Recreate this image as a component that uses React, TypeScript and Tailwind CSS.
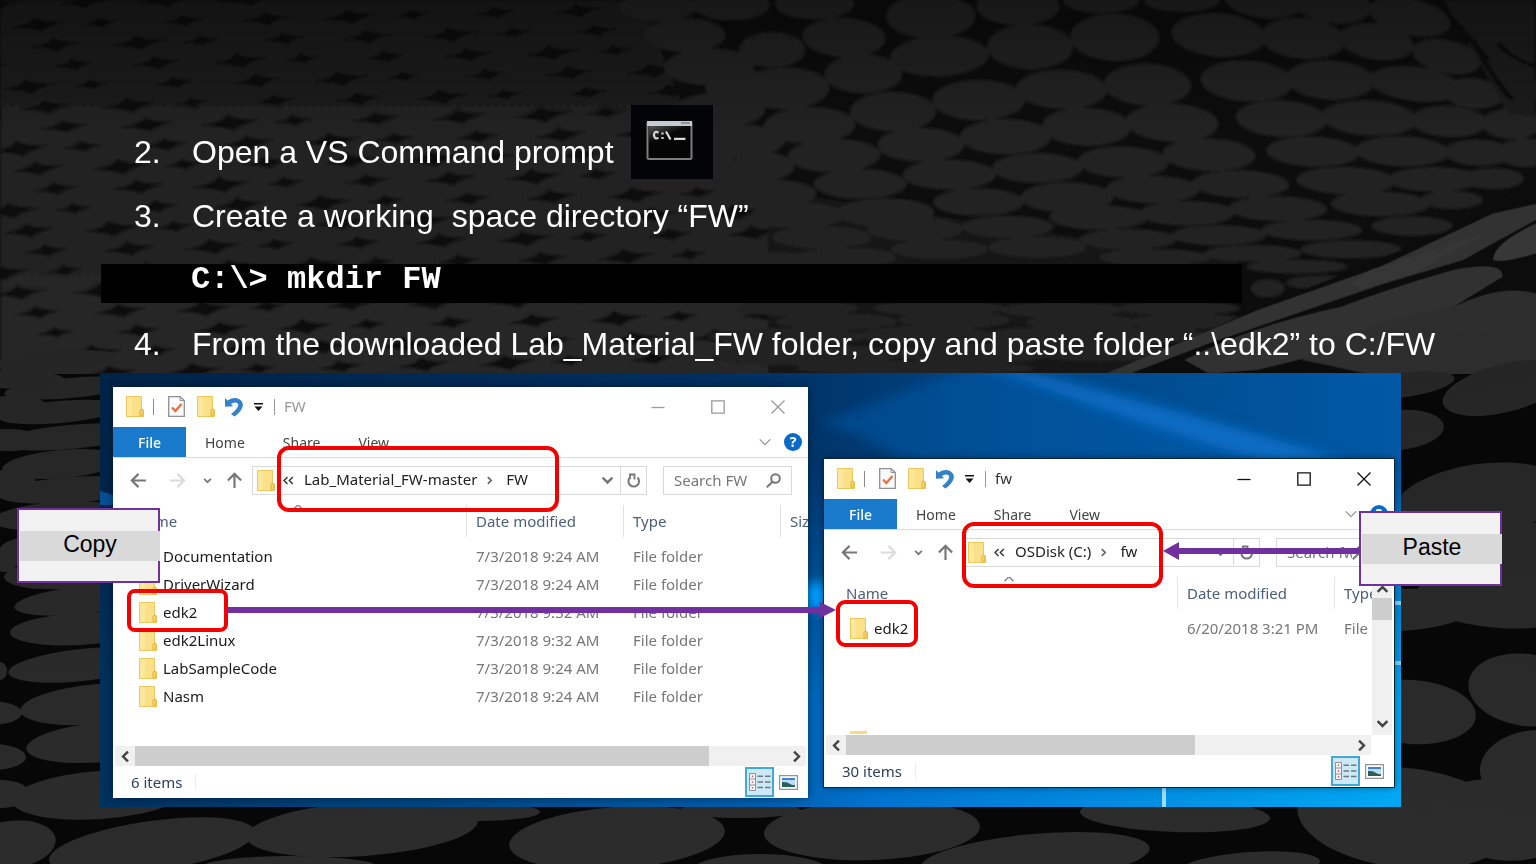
import React from "react";

type Ellipse = [number, number, number, number, number];

const upperStones: Ellipse[] = [
  [-225, 20, 76, 40, 0], [-75, 14, 76, 44, 0], [-170, 105, 80, 48, 0], [-120, 200, 90, 52, -3], [-55, 262, 70, 50, -3], [-100, 330, 92, 50, -3], [-60, 425, 92, 48, -3], [-150, 505, 90, 40, -3],
  [95, 10, 78, 45, 0], [332, 48, 88, 64, 0], [510, 18, 82, 54, 0], [680, 0, 75, 36, 0], [845, 0, 75, 32, 0], [1010, 0, 80, 50, 15], [1150, 10, 80, 55, 20],
  [155, 112, 82, 56, 5], [8, 150, 65, 50, 0], [350, 168, 98, 58, -4], [535, 140, 85, 65, 3], [708, 112, 88, 68, 4], [920, 105, 94, 62, 8], [1092, 115, 84, 58, 10], [1242, 125, 75, 50, 18], [1310, 50, 85, 50, 24], [1385, 170, 70, 45, 24],
  [35, 265, 88, 60, -2], [195, 222, 76, 56, 0], [430, 300, 92, 58, 0], [600, 268, 90, 56, 3], [775, 254, 86, 60, 4], [978, 243, 92, 58, 6], [1148, 240, 88, 56, 6], [1320, 252, 92, 48, 12], [1440, 280, 60, 42, 12], [1530, 270, 50, 45, 10],
  [85, 376, 90, 52, -2], [255, 335, 85, 56, 0], [485, 410, 90, 50, 0], [650, 380, 88, 54, 3], [825, 368, 92, 54, 4], [1048, 356, 90, 52, 5], [1228, 354, 96, 50, 5], [1390, 364, 76, 44, 5], [1520, 370, 60, 44, 0],
  [135, 467, 92, 46, -2], [312, 434, 86, 48, 0], [550, 504, 90, 42, 0], [725, 486, 90, 44, 2], [900, 464, 92, 46, 3], [1112, 455, 92, 42, 3], [1295, 454, 94, 42, 3], [1450, 458, 66, 36, 3], [1550, 458, 60, 40, 0],
  [-10, 500, 60, 40, 0], [188, 552, 92, 42, 0], [370, 524, 92, 42, 0], [610, 592, 92, 42, 0], [785, 568, 92, 38, 1], [965, 552, 96, 38, 2], [1180, 542, 98, 38, 2], [1360, 538, 92, 34, 0], [1480, 536, 60, 28, 0],
  [10, 580, 86, 38, 0], [240, 638, 96, 40, 0], [430, 606, 90, 38, 0], [675, 652, 98, 34, 0], [855, 640, 94, 34, 0], [1040, 626, 98, 34, 1], [1250, 612, 98, 34, 1], [1395, 600, 60, 24, 0],
  [60, 646, 92, 36, 0], [300, 688, 94, 32, 0], [490, 680, 90, 30, 0], [735, 718, 96, 28, 0], [920, 706, 94, 28, 0], [1110, 690, 100, 28, 0], [1315, 678, 80, 26, 0],
  [110, 712, 98, 30, 0], [350, 748, 96, 26, 0], [550, 742, 96, 28, 0], [790, 772, 110, 22, 0], [990, 760, 96, 22, 0], [1190, 748, 100, 24, 0],
  [160, 772, 98, 26, 0], [10, 784, 90, 24, 0], [1020, 865, 32, 24, 0], [1130, 848, 70, 18, 0], [1080, 800, 100, 18, 0],
  [60, 925, 120, 20, 0], [350, 925, 130, 20, 0], [600, 930, 120, 20, 0], [840, 925, 120, 18, 0],
  [140, 965, 120, 22, 0], [380, 960, 110, 22, 0], [640, 968, 110, 22, 0], [860, 965, 120, 20, 0],
  [40, 1010, 160, 22, 0], [320, 1005, 130, 24, 0], [560, 1010, 120, 24, 0], [780, 1005, 110, 22, 0],
  [80, 1065, 190, 28, 0], [420, 1060, 160, 28, 0], [680, 1055, 140, 26, 0], [300, 1105, 240, 18, 0],
];

const edgeStones: Ellipse[] = [
  [55, 360, 62, 9, -4], [20, 380, 45, 9, 0], [70, 388, 66, 10, -5], [10, 406, 38, 10, 0], [60, 412, 62, 11, -5], [70, 437, 72, 12, -5], [8, 440, 34, 11, 0], [62, 464, 60, 14, -5], [72, 490, 74, 13, -4],
  [6, 482, 30, 12, 0], [58, 516, 66, 14, -4], [60, 546, 60, 14, -3], [4, 560, 14, 12, 0], [66, 574, 62, 15, -3], [84, 600, 70, 14, -6], [80, 629, 70, 16, -3],
  [82, 665, 74, 16, -6], [98, 704, 78, 20, -5], [104, 742, 78, 20, -5], [0, 671, 7, 9, 0], [-10, 713, 32, 12, 0], [-8, 757, 34, 13, 0], [0, 794, 30, 14, 0],
  [100, 795, 88, 24, -4], [10, 845, 46, 24, -8], [152, 846, 104, 25, -8], [362, 829, 116, 27, -4], [617, 838, 108, 31, -4], [290, 868, 90, 12, 0], [872, 830, 108, 30, -2], [1035, 858, 115, 24, -5], [1175, 815, 95, 17, 2],
  [740, 810, 60, 8, 0], [480, 812, 60, 9, 0], [760, 872, 70, 18, 0], [1405, 818, 108, 50, 6], [1250, 866, 70, 14, -4], [1500, 820, 70, 40, 8],
  [1412, 712, 64, 32, 4], [1526, 690, 58, 36, 8], [1400, 610, 75, 21, -3], [1500, 600, 85, 28, 4], [1480, 500, 86, 36, -8], [1530, 550, 90, 28, 6],
  [1398, 430, 46, 20, -5], [1505, 388, 64, 24, -14], [1405, 385, 50, 12, -8], [1540, 770, 60, 40, 0],
];

const crevices: { x: number; y: number; s: number }[] = [];
for (let row = 0; row < 19; row++) {
  for (let col = -4; col < 12; col++) {
    const x = col * 78 + row * 23 + ((row * 7 + col * 5) % 4) * 5;
    if (x > -20 && x < 770) crevices.push({ x, y: row * 20 + 4 - col * 2, s: 0.65 + ((row * 3 + col * 5 + 40) % 4) * 0.1 });
  }
}

function StoneBackdrop() {
  return (
    <svg aria-hidden="true" className="absolute inset-0 h-full w-full" viewBox="0 0 1536 864" preserveAspectRatio="xMidYMid slice">
      <defs>
        <filter id="soft" x="-5%" y="-5%" width="110%" height="110%"><feGaussianBlur stdDeviation="1.8" /></filter>
        <linearGradient id="stone" x1="0" y1="0" x2="0" y2="864" gradientUnits="userSpaceOnUse">
          <stop offset="0" stopColor="#1c1c1c" /><stop offset=".3" stopColor="#242424" /><stop offset="1" stopColor="#2c2c2c" />
        </linearGradient>
        <linearGradient id="shade" x1="0" y1="0" x2="0" y2="1">
          <stop offset="0" stopColor="#000" stopOpacity=".3" /><stop offset="1" stopColor="#000" stopOpacity="0" />
        </linearGradient>
      </defs>
      <rect width="1536" height="864" fill="#060606" />
      <g filter="url(#soft)">
        <path d="M0 0H790L780 380H0Z" fill="url(#stone)" />
        {crevices.map((c, i) => (
          <path
            key={i}
            transform={`translate(${c.x} ${c.y}) scale(${c.s})`}
            d="M-34 4Q-8 1 -4 -8Q6 -1 32 -3Q9 2 3 9Q-6 4 -34 4"
            fill="#070707"
          />
        ))}
        <path d="M640 0H1536V864H768V190L700 150Z" fill="#0a0a0a" />
        <path d="M768 190L1240 262L1130 374H768Z" fill="#181818" />
        <g transform="translate(768 0) scale(.4898 .3333)" fill="#232323">
          {upperStones.map(([x, y, rx, ry, a], i) => (
            <ellipse key={i} cx={x} cy={y} rx={rx + 3} ry={ry + 3} transform={`rotate(${a} ${x} ${y})`} />
          ))}
          <path d="M1380 0Q1450 180 1510 340L1568 350V0Z" fill="#1d1d1d" />
          <path d="M1440 120Q1480 240 1520 300M1490 130Q1520 180 1568 200M1400 60L1470 180" stroke="#090909" strokeWidth="12" fill="none" />
        </g>
      </g>
      <g transform="translate(768 0) scale(.4898 .3333)">
        <path d="M700 1120L1000 925L1380 700L1568 530V1200H700Z" fill="#0c0c0c" />
        <path d="M690 1120L1000 930L1250 800L1480 640L1568 612V660L1480 730L1420 780L1260 850L1100 930L900 1030L740 1120Z" fill="#323232" />
        <path d="M1190 850L1230 810L1480 690L1320 820L1210 870Z" fill="#363636" />
        <path d="M1480 780Q1480 730 1568 670V760Q1500 790 1480 780" fill="#373737" />
        <path d="M850 1080Q980 980 1170 920Q1300 850 1400 810Q1500 780 1500 830L1400 920L1220 1000L1110 1070L1000 1110L900 1120Z" fill="#313131" />
        <path d="M1090 1080Q1180 980 1400 920Q1500 850 1568 880V1120Q1500 1150 1390 1130L1220 1120Z" fill="#2e2e2e" />
        <path d="M1240 1200Q1220 1120 1300 1050Q1430 980 1568 990V1200Z" fill="#2d2d2d" />
      </g>
      <path d="M0 374H105V864H0ZM0 805H1536V864H0ZM1399 374H1536V864H1399Z" fill="#070707" />
      <g fill="url(#stone)">
        {edgeStones.map(([x, y, rx, ry, a], i) => (
          <ellipse key={i} cx={x} cy={y} rx={rx} ry={ry} transform={`rotate(${a} ${x} ${y})`} />
        ))}
      </g>
      <rect width="1536" height="130" fill="url(#shade)" />
    </svg>
  );
}

function FolderIcon() {
  return (
    <svg aria-hidden="true" className="block h-[21px] w-[18px] shrink-0" viewBox="0 0 18 21">
      <path d="M.5 .5H15.5V13L17.5 14V20.5H.5Z" fill="#fbe08a" stroke="#ecc75c" />
      <path d="M1 1H6V20H1Z" fill="#fde79c" />
      <path d="M14 20V14.5L15 13H16L17 14V20Z" fill="#f7d264" stroke="#e3b53c" />
    </svg>
  );
}

function CheckDocIcon() {
  return (
    <svg aria-hidden="true" className="block h-[21px] w-[17px]" viewBox="0 0 17 21" fill="none">
      <path d="M.7 .7H12L16.3 4.5V20.3H.7Z" fill="#fbfbfb" stroke="#909090" strokeWidth="1.3" />
      <path d="M12 .7V4.5H16.3" stroke="#909090" />
      <path d="M4 11.5L7.3 15L13.5 8" stroke="#ec6b3c" strokeWidth="2.2" />
    </svg>
  );
}

function UndoIcon() {
  return (
    <svg aria-hidden="true" className="block h-[20px] w-[18px]" viewBox="0 0 18 20" fill="none">
      <path d="M0 1L2.5 3.5Q9 -.5 14 2Q19 5 17.5 10Q15.500 15.5 9.5 19.500L6 17Q12.500 12 13.200 8.500Q13.500 5.800 10.500 5.500Q8 5.400 6 7L8 9.300L0 9.800Z" fill="#3382c8" />
    </svg>
  );
}

function Chevron({ dir, className }: { dir: "up" | "down" | "left" | "right"; className: string }) {
  const paths = { down: "M2 5L8 11L14 5", up: "M2 11L8 5L14 11", left: "M11 2L5 8L11 14", right: "M5 2L11 8L5 14" };
  return (
    <svg aria-hidden="true" className={`block ${className}`} viewBox="0 0 16 16" fill="none" stroke="currentColor">
      <path d={paths[dir]} />
    </svg>
  );
}

function Arrow({ dir, className }: { dir: "up" | "left" | "right"; className: string }) {
  const paths = { left: "M17 9H2M9 2L2 9L9 16", right: "M1 9H16M9 2L16 9L9 16", up: "M9 17V2M2 9L9 2L16 9" };
  return (
    <svg aria-hidden="true" className={`block h-[17px] w-[17px] ${className}`} viewBox="0 0 18 18" fill="none" stroke="currentColor" strokeWidth="2.300">
      <path d={paths[dir]} />
    </svg>
  );
}

function DetailsIcon() {
  return (
    <svg aria-hidden="true" className="block h-[18px] w-[22px]" viewBox="0 0 22 18" fill="none">
      <path d="M.5 .5H6.500V17.500H.5ZM.5 6H6.500M.5 12H6.500" stroke="#8a8f94" fill="#f6f6f6" />
      <path d="M2.800 3.300H4.200M2.800 9H4.200M2.800 14.700H4.200" stroke="#c55" strokeWidth="1.400" />
      <path d="M8.500 3.300H14M16 3.300H21.500M8.500 9H14M16 9H21.500M8.500 14.500H14M16 14.500H21.500" stroke="#70787e" strokeWidth="1.500" />
    </svg>
  );
}

function PictureIcon() {
  return (
    <svg aria-hidden="true" className="block h-[15px] w-[19px]" viewBox="0 0 19 15">
      <path d="M.6 .6H18.400V14.400H.6Z" fill="#fff" stroke="#8f9498" strokeWidth="1.200" />
      <path d="M3 3H16V12H3Z" fill="#b8ddf5" /><path d="M3 3H16V5H3Z" fill="#3f7fd6" />
      <path d="M3 7Q8 6.500 11 9Q13 10.500 16 10V12H3Z" fill="#2c5f5a" />
    </svg>
  );
}

type Row = { name: string; date: string; type: string };
type ExplorerProps = {
  title: string;
  active?: boolean;
  parent: string;
  searchClass: string;
  rows: Row[];
  count: string;
  thumbClass: string;
  vertical?: boolean;
  className: string;
};

function Explorer({ title, active = false, parent, searchClass, rows, count, thumbClass, vertical = false, className }: ExplorerProps) {
  return (
    <section
      aria-label={`${title} folder`}
      className={`flex min-w-0 flex-col overflow-hidden bg-white font-['Noto_Sans','Open_Sans',sans-serif] text-[15px] shadow-[0_0_8px_rgba(0,0,0,0.45)] ${active ? "outline-1 outline-[#10243a]" : ""} ${className}`}
    >
      <header className="flex h-10 shrink-0 items-center pb-px pl-[13px]">
        <FolderIcon />
        <span className="ml-[9px] h-4 w-px bg-[#8c8c8c]" />
        <button aria-label="Properties" className="ml-[14px]"><CheckDocIcon /></button>
        <button aria-label="New folder" className="ml-[12px]"><FolderIcon /></button>
        <button aria-label="Undo" className="ml-[10px]"><UndoIcon /></button>
        <button aria-label="Customize toolbar" className="ml-[10px]">
          <svg aria-hidden="true" className="block h-[10px] w-[11px]" viewBox="0 0 11 10"><path d="M1 1H10V2.500H1ZM1.500 4.500H9.500L5.500 9Z" fill="#111" /></svg>
        </button>
        <span className="ml-[10px] h-4 w-px bg-[#9a9a9a]" />
        <h2 className={`ml-[9px] flex-1 ${active ? "text-[#333]" : "text-[#999]"}`}>{title}</h2>
        <div className={`flex ${active ? "text-[#111]" : "text-[#999]"}`}>
          <button aria-label="Minimize" className="flex h-9 w-[60px] items-center justify-center">
            <svg className="h-[14px] w-[14px]" viewBox="0 0 14 14" fill="none" stroke="currentColor" strokeWidth="1.300"><path d="M.5 7.500H13.500" /></svg>
          </button>
          <button aria-label="Maximize" className="flex h-9 w-[60px] items-center justify-center">
            <svg className="h-[14px] w-[14px]" viewBox="0 0 14 14" fill="none" stroke="currentColor" strokeWidth="1.300"><path d="M.8 .8H13.200V13.200H.8Z" /></svg>
          </button>
          <button aria-label="Close" className="flex h-9 w-[60px] items-center justify-center">
            <svg className="h-[14px] w-[14px]" viewBox="0 0 14 14" fill="none" stroke="currentColor" strokeWidth="1.300"><path d="M.5 .5L13.500 13.500M13.500 .5L.5 13.500" /></svg>
          </button>
        </div>
      </header>

      <nav aria-label="Ribbon" className="flex h-[31px] shrink-0 items-stretch border-b border-[#dcdcdc] text-[14px] text-[#444]">
        <button className="w-[73px] bg-[#1979ca] font-medium text-white">File</button>
        <button className="px-[19px]">Home</button>
        <button className="px-[19px]">Share</button>
        <button className="px-[19px]">View</button>
        <span className="flex-1" />
        <button aria-label="Expand ribbon"><Chevron dir="down" className="h-[14px] w-[14px] stroke-[1.6px] text-[#999]" /></button>
        <button aria-label="Help" className="my-auto ml-[12px] mr-[6px] flex h-[18px] w-[18px] items-center justify-center rounded-full bg-[#0b69c7] text-[14px] font-bold leading-none text-white">?</button>
      </nav>

      <div className="mb-[3px] flex h-[44px] shrink-0 items-center pr-4 text-[#777]">
        <button aria-label="Back" className="ml-[17px]"><Arrow dir="left" className="" /></button>
        <button aria-label="Forward" className="ml-[22px]"><Arrow dir="right" className="text-[#dcdcdc]" /></button>
        <button aria-label="Recent" className="ml-[17px]"><Chevron dir="down" className="h-[9px] w-[9px] stroke-[3px]" /></button>
        <button aria-label="Up" className="ml-[14px]"><Arrow dir="up" className="" /></button>
        <div className="ml-[9px] flex h-[29px] min-w-0 flex-1 items-center border border-[#d9d9d9] pl-[4px] text-[#222]">
          <FolderIcon />
          <svg aria-hidden="true" className="ml-[8px] h-[9px] w-[11px] shrink-0" viewBox="0 0 11 9" fill="none" stroke="#333" strokeWidth="1.400">
            <path d="M4.500 1L1 4.500L4.500 8M9.800 1L6.300 4.500L9.800 8" />
          </svg>
          <button className="ml-[10px] whitespace-nowrap pb-[2px]">{parent}</button>
          <Chevron dir="right" className="ml-[8px] h-[9px] w-[9px] stroke-[3px] text-[#666]" />
          <button className="ml-[12px] pb-[2px]">{title}</button>
          <span className="flex-1" />
          <button aria-label="Previous locations"><Chevron dir="down" className="mr-[6px] h-[14px] w-[13px] stroke-[3px] text-[#777]" /></button>
          <button aria-label="Refresh" className="flex h-full w-[26px] items-center justify-center border-l border-[#d9d9d9]">
            <svg aria-hidden="true" className="h-[15px] w-[14px]" viewBox="0 0 14 15" fill="none" stroke="#777" strokeWidth="2">
              <path d="M10.500 4.500A5.300 5.300 0 1 1 3 4.500" /><path d="M3 1.500V5.800M2 1.500H7.500V6.500" strokeWidth="1.800" />
            </svg>
          </button>
        </div>
        <label className={`ml-4 flex h-[29px] items-center border border-[#d9d9d9] pl-[10px] ${searchClass}`}>
          <input aria-label={`Search ${title}`} placeholder={`Search ${title}`} className="w-full min-w-0 bg-transparent outline-none placeholder:text-[#777]" />
          <svg aria-hidden="true" className="mr-[10px] h-[15px] w-[15px] shrink-0" viewBox="0 0 15 15" fill="none" stroke="#777" strokeWidth="2">
            <circle cx="9.500" cy="5.500" r="4.300" /><path d="M6.500 8.700L.8 14.200" />
          </svg>
        </label>
      </div>

      <div className="flex min-h-0 flex-1">
        <div className="min-w-0 flex-1 overflow-hidden">
          <table className="w-[760px] table-fixed border-collapse text-left">
            <colgroup>
              <col className="w-[354px]" /><col className="w-[157px]" /><col className="w-[157px]" /><col />
            </colgroup>
            <thead>
              <tr className="h-[37px] align-top leading-8 text-[#4c607a]">
                <th className="p-0 font-normal">
                  <div className="relative h-8 border-r border-[#e2e2e2] pl-[22px]">
                    Name
                    <Chevron dir="up" className="absolute left-[179px] top-[-4px] h-[12px] w-[12px] stroke-2 text-[#888]" />
                  </div>
                </th>
                <th className="p-0 font-normal"><div className="h-8 border-r border-[#e2e2e2] pl-[9px]">Date modified</div></th>
                <th className="p-0 font-normal"><div className="h-8 border-r border-[#e2e2e2] pl-[9px]">Type</div></th>
                <th className="p-0 font-normal"><div className="h-8 pl-[9px]">Size</div></th>
              </tr>
            </thead>
            <tbody>
              {rows.map((r) => (
                <tr key={r.name} className="h-7 text-[#777]">
                  <td className="p-0"><div className="flex items-center gap-[6px] pl-[26px] text-[#1a1a1a]"><FolderIcon />{r.name}</div></td>
                  <td className="p-0 pl-[9px]">{r.date}</td>
                  <td className="p-0 pl-[9px]">{r.type}</td>
                  <td className="p-0" />
                </tr>
              ))}
            </tbody>
          </table>
          {vertical && <div className="ml-[26px] mt-[89px] h-[3px] w-[17px] bg-[#f7dc86]" />}
        </div>
        {vertical && (
          <div className="mr-[2px] mt-[3px] flex w-[20px] flex-col items-center bg-[#f0f0f0] text-[#444]">
            <button aria-label="Scroll up" className="flex h-[18px] items-center"><Chevron dir="up" className="h-[13px] w-[13px] stroke-[3px]" /></button>
            <div className="h-[22px] w-full bg-[#cdcdcd]" />
            <span className="flex-1" />
            <button aria-label="Scroll down" className="flex h-[24px] items-center"><Chevron dir="down" className="h-[13px] w-[13px] stroke-[3px]" /></button>
          </div>
        )}
      </div>

      <div className={`ml-[2px] flex h-5 shrink-0 items-center bg-[#f0f0f0] text-[#444] ${vertical ? "mr-[23px]" : "mr-[2px]"}`}>
        <button aria-label="Scroll left" className="flex w-5 justify-center"><Chevron dir="left" className="h-[13px] w-[13px] stroke-[3px]" /></button>
        <div className={`h-full bg-[#cdcdcd] ${thumbClass}`} />
        <span className="flex-1" />
        <button aria-label="Scroll right" className="flex w-5 justify-center"><Chevron dir="right" className="h-[13px] w-[13px] stroke-[3px]" /></button>
      </div>

      <footer className="flex h-8 shrink-0 items-center pl-[18px] text-[#2d405c]">
        <span>{count}</span>
        <span className="ml-[13px] h-4 w-px bg-[#ececec]" />
        <span className="flex-1" />
        <button aria-label="Details view" className="flex h-[30px] w-[29px] items-center justify-center border-2 border-[#3fa9dc] bg-[#cde8f6]"><DetailsIcon /></button>
        <button aria-label="Thumbnail view" className="ml-[5px] mr-[10px]"><PictureIcon /></button>
      </footer>
    </section>
  );
}

function DesktopWallpaper() {
  return (
    <svg aria-hidden="true" className="absolute inset-0 h-full w-full" viewBox="0 0 1301 434" preserveAspectRatio="none">
      <defs>
        <linearGradient id="sky" x1="0" y1="0" x2="1" y2="0">
          <stop offset="0" stopColor="#002348" /><stop offset=".5" stopColor="#003062" /><stop offset=".7" stopColor="#004684" /><stop offset="1" stopColor="#0059a6" />
        </linearGradient>
        <linearGradient id="floor" x1="0" y1="0" x2="1" y2="0">
          <stop offset="0" stopColor="#00315f" /><stop offset=".5" stopColor="#005cab" /><stop offset=".6" stopColor="#0074d0" /><stop offset="1" stopColor="#00a8f4" />
        </linearGradient>
        <linearGradient id="mask" x1="0" y1="0" x2="0" y2="1">
          <stop offset=".2" stopColor="#fff" stopOpacity="0" /><stop offset=".75" stopColor="#fff" />
        </linearGradient>
        <mask id="low"><rect width="1301" height="434" fill="url(#mask)" /></mask>
        <filter id="glow"><feGaussianBlur stdDeviation="6" /></filter>
      </defs>
      <rect width="1301" height="434" fill="url(#sky)" />
      <rect width="1301" height="434" fill="url(#floor)" mask="url(#low)" />
      <g filter="url(#glow)">
        <path d="M880 -10Q1060 24 1240 90V140H860Q820 80 720 50Z" fill="#0062b6" opacity=".4" />
        <path d="M900 -8Q1040 26 1250 88L1170 90Q1040 52 880 -8Z" fill="#0a74d0" opacity=".75" />
        <path d="M704 210H728V236H704Z" fill="#009cff" />
      </g>
      <path d="M0 118L13 122V132H0Z" fill="#064f94" />
      <path d="M1290 228H1301V232H1290ZM1290 288H1301V292H1290Z" fill="#7fd0fb" />
      <path d="M1062 410H1066V434H1062Z" fill="#9bdcfb" />
    </svg>
  );
}

function Callout({ children, className }: { children: React.ReactNode; className: string }) {
  return (
    <div className={`absolute flex h-[75px] w-[143px] flex-col justify-center border-2 border-[#7030a0] bg-[#f2f2f2] ${className}`}>
      <p className="-mr-[2px] ml-px bg-[#d9d9d9] pb-[4px] text-center text-[23px] leading-[26px] text-black">{children}</p>
    </div>
  );
}

const sourceRows: Row[] = [
  { name: "Documentation", date: "7/3/2018 9:24 AM", type: "File folder" },
  { name: "DriverWizard", date: "7/3/2018 9:24 AM", type: "File folder" },
  { name: "edk2", date: "7/3/2018 9:32 AM", type: "File folder" },
  { name: "edk2Linux", date: "7/3/2018 9:32 AM", type: "File folder" },
  { name: "LabSampleCode", date: "7/3/2018 9:24 AM", type: "File folder" },
  { name: "Nasm", date: "7/3/2018 9:24 AM", type: "File folder" },
];
const targetRows: Row[] = [{ name: "edk2", date: "6/20/2018 3:21 PM", type: "File folder" }];

export default function App() {
  return (
    <main className="relative min-h-screen overflow-hidden bg-[#060606] pb-14 font-['Liberation_Sans',Arial,sans-serif]">
      <StoneBackdrop />
      <div className="relative pt-[105px]">
        <ol className="text-[32px] leading-[62px] text-white">
          <li className="flex h-20 pl-[134px]">
            <span className="w-[58px] pt-4">2.</span>
            <span className="pt-4">Open a VS Command prompt</span>
            <svg role="img" aria-label="Command prompt" className="ml-[17px] h-[74px] w-[82px]" viewBox="0 0 82 74">
              <defs>
                <linearGradient id="glass" x1="0" y1="0" x2="1" y2="1"><stop offset="0" stopColor="#777" /><stop offset=".5" stopColor="#0a0a0a" /></linearGradient>
              </defs>
              <rect width="82" height="74" fill="#020408" />
              <rect x="16.500" y="17" width="44" height="37" rx="1.500" fill="#050505" stroke="#7d7d7d" strokeWidth="2" />
              <path d="M18 21H59V27Q40 36 18 38Z" fill="url(#glass)" opacity=".7" />
              <path d="M16 16H61V21H16Z" fill="#c4cad2" /><path d="M50 17H59V19H50Z" fill="#8a93a0" />
              <g stroke="#d8d8d8" strokeWidth="2.200" fill="none">
                <path d="M27.500 27.500Q23 25.500 23 30Q23 34.500 27.500 33" /><path d="M31.500 27.500V29.500M31.500 32V34M35 26.500L39.500 34.500M43 33.800H54.500" />
              </g>
            </svg>
          </li>
          <li className="flex h-16 pl-[134px]">
            <span className="w-[58px]">3.</span>
            <span className="whitespace-pre">{"Create a working  space directory “FW”"}</span>
          </li>
          <li className="flex h-16 list-none items-center pt-[5px]">
            <code className="ml-[101px] mr-[294px] block h-[39px] flex-1 bg-black pl-[90px] font-['Liberation_Mono','Courier_New',monospace] font-bold leading-8">
              C:\&gt; mkdir FW
            </code>
          </li>
          <li className="flex h-[55px] pl-[134px]">
            <span className="w-[58px] shrink-0">4.</span>
            <span className="whitespace-nowrap">From the downloaded Lab_Material_FW folder, copy and paste folder “..\edk2” to C:/FW</span>
          </li>
        </ol>

        <figure className="relative ml-[100px] mr-[135px] mt-[5px]">
          <DesktopWallpaper />
          <div className="relative flex gap-4 pb-[9px] pl-[13px] pr-[7px] pt-[14px]">
            <Explorer
              title="FW" parent="Lab_Material_FW-master" searchClass="w-[129px]"
              rows={sourceRows} count="6 items" thumbClass="w-[83%]" className="h-[411px] flex-[695_1_0%]"
            />
            <Explorer
              active vertical title="fw" parent="OSDisk (C:)" searchClass="w-[102px]"
              rows={targetRows} count="30 items" thumbClass="w-[64%]" className="mt-[72px] h-[328px] flex-[570_1_0%]"
            />
          </div>

          <div className="absolute left-[177px] top-[73px] h-[66px] w-[282px] rounded-[12px] border-4 border-[#f40000]" />
          <div className="absolute left-[27px] top-[216px] h-[43px] w-[101px] rounded-[8px] border-4 border-[#f40000]" />
          <div className="absolute left-[862px] top-[149px] h-[66px] w-[201px] rounded-[12px] border-4 border-[#f40000]" />
          <div className="absolute left-[736px] top-[227px] h-[47px] w-[82px] rounded-[9px] border-4 border-[#f40000]" />
          <svg aria-hidden="true" className="absolute left-[128px] top-[228px] h-[18px] w-[608px]" viewBox="0 0 608 18">
            <path d="M0 6H592V1L608 9L592 17V12H0Z" fill="#7030a0" />
          </svg>
          <svg aria-hidden="true" className="absolute left-[1063px] top-[169px] h-[18px] w-[198px]" viewBox="0 0 198 18">
            <path d="M198 6H16V0L0 9L16 18V12H198Z" fill="#7030a0" />
          </svg>
          <Callout className="left-[-83px] top-[135px]">Copy</Callout>
          <Callout className="left-[1259px] top-[138px]">Paste</Callout>
        </figure>
      </div>
    </main>
  );
}
